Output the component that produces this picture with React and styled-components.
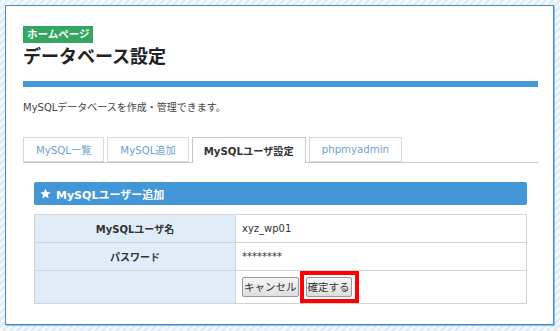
import React from 'react';
import styled, { createGlobalStyle } from 'styled-components';

const GlobalStyle = createGlobalStyle`
  html, body {
    margin: 0;
    padding: 0;
    height: 100%;
  }
  body {
    font-family: "DejaVu Sans", "Noto Sans CJK JP", sans-serif;
    color: #333;
    background: repeating-linear-gradient(
      -45deg,
      #f4f8fb 0px,
      #f4f8fb 3px,
      #dfeaf3 3px,
      #dfeaf3 5px
    );
  }
  #root {
    padding: 5px 6px 6px 5px;
  }
`;

const Panel = styled.div`
  background: #fff;
  border: 1px solid #3d8fd1;
  box-shadow: 1px 1px 0 #8dbde6;
  height: 320px;
  box-sizing: border-box;
  padding: 17px 15px 20px 17px;
`;

const Badge = styled.span`
  display: inline-block;
  background: #35a65f;
  color: #fff;
  font-size: 10.5px;
  font-weight: bold;
  line-height: 17px;
  padding: 0 4px;
`;

const Title = styled.h1`
  margin: 1px 0 0;
  font-size: 18px;
  font-weight: bold;
  line-height: 22px;
  color: #222;
  font-family: "Noto Sans CJK JP", sans-serif;
`;

const Bar = styled.div`
  height: 6px;
  background: #4598d6;
  margin-top: 15px;
`;

const Desc = styled.p`
  margin: 14px 0 0;
  font-size: 10px;
  line-height: 14px;
  color: #444;
`;

const Tabs = styled.div`
  display: flex;
  gap: 3px;
  margin-top: 22px;
  border-bottom: 1px solid #c8c8c8;
  height: 25px;
`;

const Tab = styled.div`
  height: ${({ $active }) => ($active ? '26px' : '25px')};
  box-sizing: border-box;
  padding: 0 ${({ $active }) => ($active ? '11px' : '12px')};
  border: 1px solid #d9d9d9;
  border-bottom: ${({ $active }) => ($active ? 'none' : '1px solid #d9d9d9')};
  ${({ $active }) => $active && 'border-color: #c8c8c8;'}
  background: #fff;
  color: ${({ $active }) => ($active ? '#333' : '#6e9fd2')};
  font-weight: ${({ $active }) => ($active ? 'bold' : 'normal')};
  font-size: 10.2px;
  display: flex;
  align-items: center;
  position: relative;
  z-index: 1;
`;

const Section = styled.div`
  margin: 19px 11px 0;
`;

const SectionHead = styled.div`
  background: #4497d6;
  color: #fff;
  font-weight: bold;
  font-size: 11px;
  height: 23px;
  display: flex;
  align-items: center;
  gap: 5px;
  padding: 0 6px;
  border-radius: 2px;
`;

const Table = styled.table`
  width: 100%;
  border-collapse: collapse;
  margin-top: 9px;
  font-size: 10px;
`;

const Th = styled.th`
  width: 200px;
  background: #deedf8;
  border: 1px solid #d4d4d4;
  font-weight: bold;
  color: #333;
  height: ${({ $h }) => $h || 27}px;
  padding: 0;
`;

const Td = styled.td`
  border: 1px solid #d4d4d4;
  padding: 0 6px;
  color: #333;
  height: ${({ $h }) => $h || 27}px;
`;

const Buttons = styled.div`
  display: flex;
  align-items: center;
  gap: 1px;
`;

const Button = styled.button`
  font-family: "Noto Sans CJK JP", sans-serif;
  font-size: 10.5px;
  color: #333;
  height: 20px;
  padding: 0 1px;
  border: 1px solid #9a9a9a;
  border-radius: 2px;
  background: linear-gradient(#f6f6f6, #dedede);
  line-height: 1;
`;

const Highlight = styled.span`
  display: inline-flex;
  border: 4px solid #f00;
  padding: 2px 3px 2px 2px;
`;

const Star = () => (
  <svg width="11" height="11" viewBox="0 0 24 24">
    <path fill="#fff" d="M12 1.5l3.2 7.4 8 .7-6.1 5.3 1.9 7.9L12 18.6l-7 4.2 1.9-7.9L.8 9.6l8-.7z" />
  </svg>
);

const tabs = ['MySQL一覧', 'MySQL追加', 'MySQLユーザ設定', 'phpmyadmin'];

export default function App() {
  return (
    <>
      <GlobalStyle />
      <Panel>
        <Badge>ホームページ</Badge>
        <Title>データベース設定</Title>
        <Bar />
        <Desc>MySQLデータベースを作成・管理できます。</Desc>
        <Tabs>
          {tabs.map((t, i) => (
            <Tab key={t} $active={i === 2}>{t}</Tab>
          ))}
        </Tabs>
        <Section>
          <SectionHead>
            <Star />
            MySQLユーザー追加
          </SectionHead>
          <Table>
            <tbody>
              <tr>
                <Th>MySQLユーザ名</Th>
                <Td>xyz_wp01</Td>
              </tr>
              <tr>
                <Th>パスワード</Th>
                <Td>********</Td>
              </tr>
              <tr>
                <Th $h={32} />
                <Td $h={32}>
                  <Buttons>
                    <Button>キャンセル</Button>
                    <Highlight>
                      <Button>確定する</Button>
                    </Highlight>
                  </Buttons>
                </Td>
              </tr>
            </tbody>
          </Table>
        </Section>
      </Panel>
    </>
  );
}
